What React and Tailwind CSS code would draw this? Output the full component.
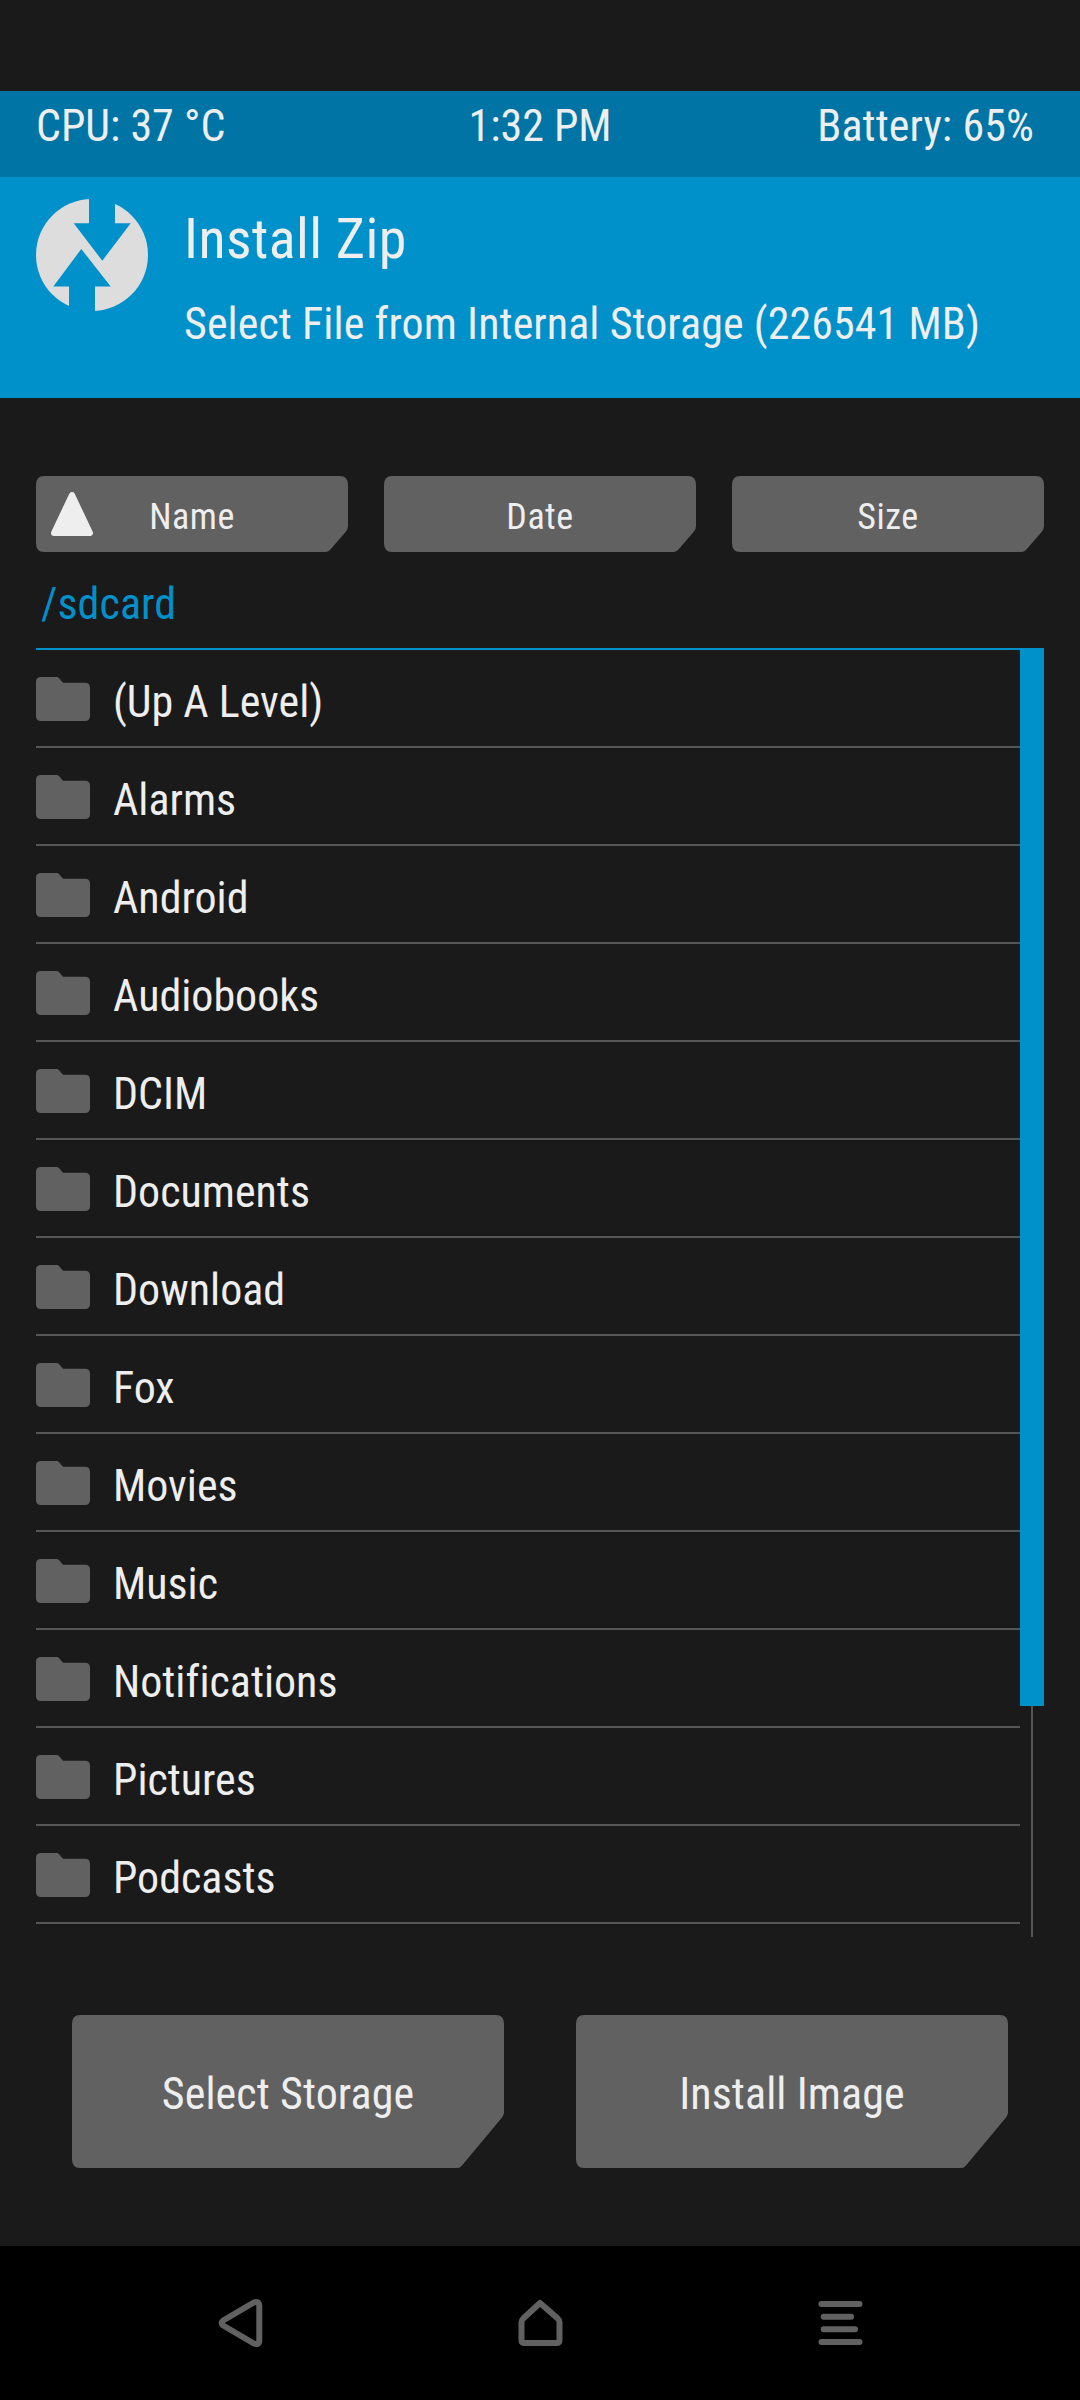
import React, { useState } from 'react';

const folders = [
    '(Up A Level)',
    'Alarms',
    'Android',
    'Audiobooks',
    'DCIM',
    'Documents',
    'Download',
    'Fox',
    'Movies',
    'Music',
    'Notifications',
    'Pictures',
    'Podcasts',
];

const Logo = () => (
    <svg className="w-28 h-28 shrink-0" viewBox="0 0 112 112">
        <circle cx="56" cy="56" r="56" fill="#dddddd" />
        <path
            d="M53 -1H79V24.3H94.7L66.3 61.7L37.7 24.3H53ZM45.3 50L74.7 87.5H59V113H33V87.5H17.3Z"
            fill="#0090ca"
        />
    </svg>
);

const FolderIcon = () => (
    <svg className="w-[54px] h-11 shrink-0" viewBox="0 0 54 44">
        <path
            d="M5 0H20.500Q22 0 23 1L27 5.700H49Q54 5.700 54 10.700V39Q54 44 49 44H5Q0 44 0 39V5Q0 0 5 0Z"
            fill="#616161"
        />
    </svg>
);

const SortButton = ({ label, active, onClick }) => (
    <button onClick={onClick} className="relative w-[312px] h-[76px] pt-[5px] flex items-center justify-center text-4xl tracking-[0.5px]">
        <svg className="absolute inset-0 w-full h-full" viewBox="0 0 312 76">
            <path
                d="M8 0H304Q312 0 312 9V50Q312 53 310 55.500L294 74Q292 76 289 76H8Q0 76 0 67V9Q0 0 8 0Z"
                fill="#616161"
            />
            {active && (
                <path d="M36 19L54 57H18Z" fill="#eeeeee" stroke="#eeeeee" strokeWidth="6" strokeLinejoin="round" />
            )}
        </svg>
        <span className="relative">{label}</span>
    </button>
);

const ActionButton = ({ label }) => (
    <button className="relative w-[432px] h-[153px] pt-1 flex items-center justify-center tracking-[0.1px]">
        <svg className="absolute inset-0 w-full h-full" viewBox="0 0 432 153">
            <path
                d="M8 0H424Q432 0 432 9V97Q432 100 430 102.500L390 150.500Q388 153 385 153H8Q0 153 0 144V9Q0 0 8 0Z"
                fill="#616161"
            />
        </svg>
        <span className="relative">{label}</span>
    </button>
);

const NavBar = () => (
    <nav className="h-[154px] bg-black flex justify-center gap-[220px] pt-[34px]">
        <button className="w-20 h-20">
            <svg viewBox="0 0 80 80" fill="none" stroke="#616161" strokeWidth="6" strokeLinejoin="round">
                <path d="M23.200 40.500Q20.200 43 23.200 45.500L53.800 63.500Q59 65.500 59.300 60.500V25.700Q59 20.500 53.800 22.500Z" />
            </svg>
        </button>
        <button className="w-20 h-20">
            <svg viewBox="0 0 80 80" fill="none" stroke="#616161" strokeWidth="6" strokeLinejoin="round">
                <path d="M40 23L57.500 38.300Q59.500 40.500 59.500 42V60Q59.500 63 56.500 63H24.500Q21.500 63 21.500 60V42Q21.500 40.500 23.500 38.300Z" />
            </svg>
        </button>
        <button className="w-20 h-20">
            <svg viewBox="0 0 80 80" fill="none" stroke="#616161" strokeWidth="6" strokeLinecap="round">
                <path d="M21.500 24H59.500M23.700 36.700H51M23.700 49.300H55M21.500 62H59.500" />
            </svg>
        </button>
    </nav>
);

export default function App() {
    const [sortBy, setSortBy] = useState('Name');

    return (
        <div className="w-[1080px] h-[2400px] flex flex-col overflow-hidden bg-[#1a1a1a] text-[#eeeeee] text-[44px] [font-family:'Roboto_Condensed',Roboto,sans-serif] [font-variant-ligatures:none] pt-[91px]">
            <div className="h-[86px] grid grid-cols-3 px-9 bg-[#0074a4] leading-[70px]">
                <span>CPU: 37 °C</span>
                <span className="text-center">1:32 PM</span>
                <span className="text-right pr-2.5 tracking-[0.1px]">Battery: 65%</span>
            </div>

            <header className="h-[221px] flex gap-9 px-9 pt-[22px] bg-[#0090ca]">
                <Logo />
                <div className="pt-2">
                    <h1 className="text-[56px] leading-[64px] tracking-[0.4px]">Install Zip</h1>
                    <p className="mt-[27px] leading-[52px] tracking-[0.07px]">Select File from Internal Storage (226541 MB)</p>
                </div>
            </header>

            <main className="flex-1 px-9 pt-[78px]">
                <div className="flex justify-between">
                    {['Name', 'Date', 'Size'].map(label => (
                        <SortButton
                            key={label}
                            label={label}
                            active={sortBy === label}
                            onClick={() => setSortBy(label)}
                        />
                    ))}
                </div>

                <div className="h-24 flex items-center pt-[7px] pl-[5px] text-[#0090ca] tracking-[0.1px]">/sdcard</div>

                <div className="flex h-[1289px]">
                    <ul className="w-[984px] border-t-2 border-[#0090ca]">
                        {folders.map(name => (
                            <li key={name} className="h-[98px] flex gap-[23px] border-b-2 border-[#555555]">
                                <div className="pt-[27px]">
                                    <FolderIcon />
                                </div>
                                <span className="pt-1 leading-[96px]">{name}</span>
                            </li>
                        ))}
                    </ul>
                    {/* scrollbar: thumb on top, thin track below */}
                    <div className="w-6 flex flex-col">
                        <div className="h-[1058px] bg-[#0090ca]"></div>
                        <div className="flex-1 w-0.5 ml-[11px] bg-[#555555]"></div>
                    </div>
                </div>

                <div className="mt-[78px] px-9 flex justify-between">
                    <ActionButton label="Select Storage" />
                    <ActionButton label="Install Image" />
                </div>
            </main>

            <NavBar />
        </div>
    );
}
